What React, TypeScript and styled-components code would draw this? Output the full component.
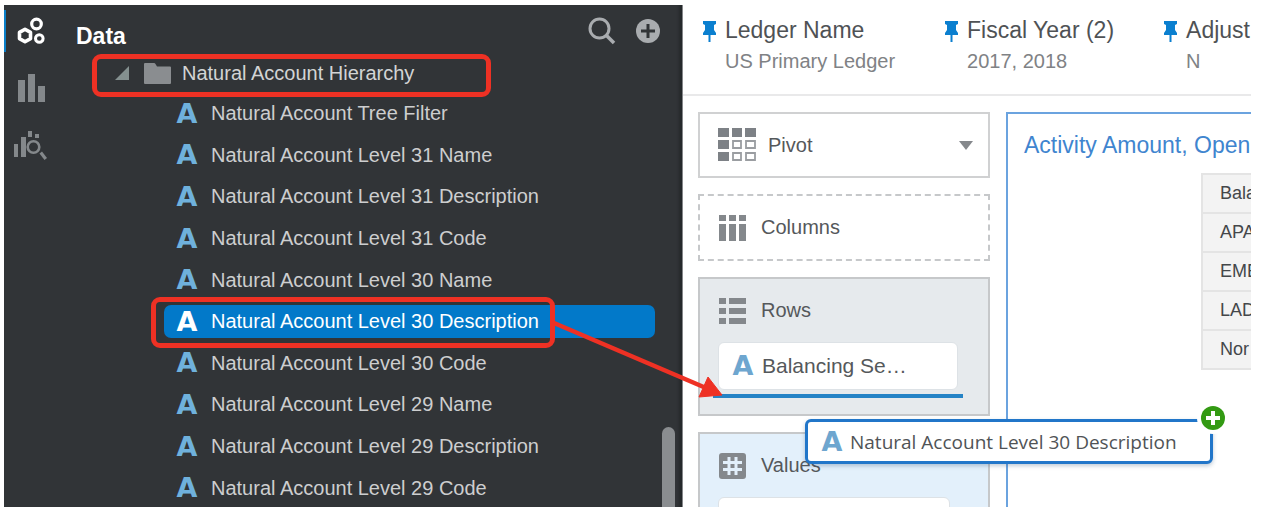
import React from "react";
import styled, { createGlobalStyle } from "styled-components";

const GlobalStyle = createGlobalStyle`
  * { box-sizing: border-box; }
  body {
    margin: 0;
    background: #fff;
    font-family: "Liberation Sans", Arial, sans-serif;
    font-size: 20px;
    color: #55585b;
  }
  button, select { font: inherit; color: inherit; background: none; border: 0; padding: 0; text-align: left; }
  svg { display: block; flex: none; }
`;

const Frame = styled.div`
  height: 100vh;
  padding: 5px 15px 11px 4px;
`;

const Workspace = styled.div`
  position: relative;
  display: flex;
  height: 100%;
  overflow: hidden;
`;

/* ---------- Sidebar ---------- */

const Sidebar = styled.aside`
  position: relative;
  display: flex;
  flex: 0 0 679px;
  background: #313437;
  border-right: 1px solid #85878a;
  box-shadow: inset -5px 0 3px -2px #26292b;
`;

const Rail = styled.nav`
  display: flex;
  flex-direction: column;
  width: 46px;
  padding-top: 5px;
`;

const RailButton = styled.button<{ $active?: boolean }>`
  display: flex;
  align-items: center;
  height: 42px;
  margin-bottom: 15px;
  padding-left: 6px;
  border-left: 2px solid ${(p) => (p.$active ? "#0a7fc8" : "transparent")};
  color: ${(p) => (p.$active ? "#fff" : "#84888b")};
`;

const DataPane = styled.section`
  display: flex;
  flex: 1;
  flex-direction: column;
  min-width: 0;
`;

const PaneHeader = styled.header`
  display: flex;
  align-items: center;
  gap: 20px;
  height: 52px;
  flex: none;
  padding: 0 22px 0 26px;
`;

const PaneTitle = styled.h1`
  flex: 1;
  margin: 0;
  padding-top: 10px;
  font-size: 23px;
  line-height: 24px;
  color: #fff;
`;

const HeaderButton = styled.button`
  color: #a9acaf;
`;

const FolderRow = styled.button`
  position: relative;
  display: flex;
  align-items: center;
  flex: none;
  height: 32px;
  padding-left: 65px;
  color: #d3d4d5;
  white-space: nowrap;
`;

const FolderName = styled.span`
  margin-left: 11px;
`;

const FieldList = styled.ul`
  display: flex;
  flex: 1;
  flex-direction: column;
  margin: 4px 0 -2px;
  padding: 0 27px 0 114px;
  list-style: none;
`;

const FieldItem = styled.li`
  position: relative;
  display: flex;
  align-items: center;
  flex: 1 1 0;
`;

const FieldButton = styled.button<{ $selected?: boolean }>`
  display: flex;
  align-items: center;
  width: 100%;
  height: 33px;
  padding-left: 12px;
  border-radius: 7px;
  white-space: nowrap;
  background: ${(p) => (p.$selected ? "#0279c9" : "transparent")};
  color: ${(p) => (p.$selected ? "#fff" : "#cdcecf")};
`;

const TypeMark = styled.span<{ $color: string }>`
  width: 22px;
  margin-right: 13px;
  font-family: "DejaVu Sans", sans-serif;
  font-size: 27px;
  font-weight: 700;
  line-height: 28px;
  text-align: center;
  color: ${(p) => p.$color};
`;

const Thumb = styled.div`
  position: absolute;
  right: 7px;
  bottom: 0;
  width: 13px;
  height: 80px;
  border-radius: 7px 7px 0 0;
  background: #8a8d90;
`;

/* ---------- Callouts ---------- */

const FolderCallout = styled.span`
  position: absolute;
  inset: -3px auto -8px 42px;
  width: 399px;
  border: 5px solid #ee3124;
  border-radius: 9px;
`;

const FieldCallout = styled.span`
  position: absolute;
  inset: -4px auto -5px -13px;
  width: 404px;
  border: 5px solid #ee3124;
  border-radius: 9px;
`;

const CalloutArrow = styled.svg`
  position: absolute;
  top: 305px;
  left: 546px;
`;

/* ---------- Main area ---------- */

const Main = styled.main`
  display: flex;
  flex: 1;
  flex-direction: column;
  min-width: 0;
`;

const FilterBar = styled.div`
  display: flex;
  flex: none;
  gap: 50px;
  height: 91px;
  padding: 11px 0 0 20px;
  border-bottom: 2px solid #e9e9ea;
  overflow: hidden;
`;

const Filter = styled.button`
  display: flex;
  align-items: flex-start;
  gap: 9px;
  white-space: nowrap;
`;

const FilterText = styled.span`
  display: flex;
  flex-direction: column;
`;

const FilterName = styled.span`
  font-size: 23px;
  line-height: 28px;
  color: #4f5255;
`;

const FilterValue = styled.span`
  line-height: 34px;
  color: #808285;
`;

const Content = styled.div`
  display: flex;
  flex: 1;
  gap: 16px;
  min-height: 0;
  padding: 16px 0 0 15px;
`;

const Grammar = styled.div`
  display: flex;
  flex-direction: column;
  flex: 0 0 292px;
  gap: 16px;
`;

const VizPicker = styled.label`
  display: flex;
  align-items: center;
  flex: none;
  height: 66px;
  padding: 0 15px 0 18px;
  border: 2px solid #d0d1d2;
`;

const VizSelect = styled.select`
  flex: 1;
  margin-left: 12px;
  appearance: none;
  outline: none;
  line-height: 24px;
`;

const DropZone = styled.section<{ $kind: "empty" | "target" | "values" }>`
  flex: none;
  padding: 0 18px;
  border: 2px ${(p) => (p.$kind === "empty" ? "dashed" : "solid")} #c6c8ca;
  background: ${(p) => ({ empty: "#fff", target: "#e6eaed", values: "#e3f0fb" })[p.$kind]};
`;

const ZoneHeader = styled.h2`
  display: flex;
  align-items: center;
  gap: 15px;
  height: 63px;
  margin: 0;
  font-size: 20px;
  font-weight: 400;
`;

const Chip = styled.button<{ $narrow?: boolean }>`
  display: flex;
  align-items: center;
  width: ${(p) => (p.$narrow ? 232 : 240)}px;
  height: 48px;
  padding-left: 13px;
  border: 1px solid #dde2e6;
  border-radius: 6px;
  background: #fff;
  font-size: 21px;
  white-space: nowrap;

  ${TypeMark} { margin-right: 8px; }
`;

const InsertLine = styled.div`
  height: 4px;
  width: 250px;
  margin: 4px 0 16px -5px;
  background: #2583c6;
`;

const VizPanel = styled.section`
  flex: 1;
  min-width: 0;
  overflow: hidden;
  border: solid #6ba3df;
  border-width: 2px 0 0 2px;
`;

const VizTitle = styled.h2`
  margin: 16px 0 0 16px;
  font-size: 23px;
  font-weight: 400;
  line-height: 30px;
  white-space: nowrap;
  color: #3f85cf;
`;

const PivotTable = styled.table`
  margin: 13px 0 0 193px;
  border-collapse: separate;
  border-spacing: 0;
  border-top: 2px solid #e4e4e4;
`;

const Cell = styled.td`
  width: 100px;
  height: 39px;
  padding: 0 0 0 17px;
  border: solid #e4e4e4;
  border-width: 0 0 2px 2px;
  background: #f3f3f3;
  font-size: 18px;
  font-weight: 400;
  text-align: left;
  color: #44474a;
`;

/* ---------- Dragged field ---------- */

const Ghost = styled.div`
  position: absolute;
  top: 414px;
  left: 801px;
  display: flex;
  align-items: center;
  width: 408px;
  height: 45px;
  padding-left: 13px;
  border: 3px solid #2176c9;
  border-radius: 6px;
  background: #fff;
  box-shadow: 0 2px 4px rgba(40, 80, 120, 0.3);
  font-family: "Open Sans", "Noto Sans", sans-serif;
  font-size: 19px;
  white-space: nowrap;
  color: #505356;

  ${TypeMark} { margin-right: 7px; }
`;

const AddBadge = styled.svg`
  position: absolute;
  top: -20px;
  right: -19px;
`;

/* ---------- Icons ---------- */

const PinSvg = styled.svg`
  margin-top: 5px;
`;

const PinIcon = () => (
  <PinSvg width="13" height="22" viewBox="0 0 13 22" fill="#0b7fcf" aria-hidden="true">
    <path d="M0 0h13v3l-2 1v5l2 3v2H7.500v7h-2v-7H0v-2l2-3V4L0 3z" />
  </PinSvg>
);

const GearsIcon = () => (
  <svg width="36" height="32" viewBox="0 0 36 32" fill="none" stroke="currentColor" aria-hidden="true">
    <path strokeWidth="3.600" strokeLinejoin="round" d="M13 14.200l5.500 3.200v6.200L13 26.800l-5.500-3.200v-6.200z" />
    <circle cx="24.500" cy="9" r="4.800" strokeWidth="3.200" />
    <circle cx="27.300" cy="23.500" r="3.800" strokeWidth="3" />
  </svg>
);

const BarsIcon = () => (
  <svg width="36" height="32" viewBox="0 0 36 32" fill="currentColor" aria-hidden="true">
    <path d="M6 8h7v22H6zM16 2h7v28h-7zM26 14h7v16h-7z" />
  </svg>
);

const ExploreIcon = () => (
  <svg width="36" height="34" viewBox="0 0 36 34" fill="currentColor" aria-hidden="true">
    <path d="M2 16h4v13H2zM9 9h5v20H9zM16 3h4v6h-4zM23 6h4v4h-4z" />
    <circle cx="21.500" cy="19" r="5.800" fill="none" stroke="currentColor" strokeWidth="2.600" />
    <path d="M27.500 25.500l2.500-2 5 6.500-2.500 2z" />
  </svg>
);

const SearchIcon = () => (
  <svg width="28" height="28" viewBox="0 0 28 28" fill="none" stroke="currentColor" aria-hidden="true">
    <circle cx="11.500" cy="11.500" r="9.500" strokeWidth="3" />
    <path d="M18 18l8 8" strokeWidth="3.500" />
  </svg>
);

const PlusIcon = () => (
  <svg width="24" height="24" viewBox="0 0 24 24" aria-hidden="true">
    <circle cx="12" cy="12" r="12" fill="currentColor" />
    <path d="M12 5v14M5 12h14" stroke="#313437" strokeWidth="3" />
  </svg>
);

const ExpandedIcon = () => (
  <svg width="14" height="14" viewBox="0 0 14 14" fill="#84908f" aria-hidden="true">
    <path d="M14 0v14H0z" />
  </svg>
);

const FolderSvg = styled.svg`
  margin-left: 15px;
`;

const FolderIcon = () => (
  <FolderSvg width="27" height="21" viewBox="0 0 27 21" fill="#8a8d90" aria-hidden="true">
    <path d="M0 1q0-1 1-1h9q1 0 1.500 1L13 3.500h13q1 0 1 1V20q0 1-1 1H1q-1 0-1-1z" />
  </FolderSvg>
);

const PivotIcon = () => (
  <svg width="38" height="34" viewBox="0 0 38 34" aria-hidden="true">
    <path fill="#7d8186" d="M0 0h11v9H0zM14 0h10v9H14zM27 0h11v9H27zM0 12h11v9H0zM0 24h11v9H0z" />
    <path fill="none" stroke="#9a9da1" strokeWidth="1.800" d="M15 13h8v7h-8zM28 13h9v7h-9zM15 25h8v7h-8zM28 25h9v7h-9z" />
  </svg>
);

const CaretIcon = () => (
  <svg width="14" height="9" viewBox="0 0 14 9" fill="#85888c" aria-hidden="true">
    <path d="M0 0h14L7 9z" />
  </svg>
);

const ColumnsIcon = () => (
  <svg width="28" height="28" viewBox="0 0 28 28" fill="#84888c" aria-hidden="true">
    <path d="M1 1h7v6H1zM11 1h7v6h-7zM21 1h7v6h-7zM1 10h7v17H1zM11 10h7v17h-7zM21 10h7v17h-7z" />
  </svg>
);

const RowsIcon = () => (
  <svg width="28" height="28" viewBox="0 0 28 28" fill="#84888c" aria-hidden="true">
    <path d="M1 1h7v6H1zM1 11h7v6H1zM1 21h7v6H1zM11 1h17v6H11zM11 11h17v6H11zM11 21h17v6H11z" />
  </svg>
);

const ValuesIcon = () => (
  <svg width="28" height="28" viewBox="0 0 28 28" aria-hidden="true">
    <rect x="1" y="1" width="27" height="26" rx="3" fill="#84888c" />
    <path d="M11 5v18M18 5v18M5 10.500h19M5 17.500h19" stroke="#e3f0fb" strokeWidth="3" />
  </svg>
);

/* ---------- Data ---------- */

const FIELDS = [
  "Natural Account Tree Filter",
  "Natural Account Level 31 Name",
  "Natural Account Level 31 Description",
  "Natural Account Level 31 Code",
  "Natural Account Level 30 Name",
  "Natural Account Level 30 Description",
  "Natural Account Level 30 Code",
  "Natural Account Level 29 Name",
  "Natural Account Level 29 Description",
  "Natural Account Level 29 Code",
];
const SELECTED = "Natural Account Level 30 Description";

const FILTERS = [
  { name: "Ledger Name", value: "US Primary Ledger" },
  { name: "Fiscal Year (2)", value: "2017, 2018" },
  { name: "Adjust", value: "N" },
];

const TABLE_ROWS = ["APA", "EME", "LAD", "Nor"];

export default function App() {
  return (
    <Frame>
      <GlobalStyle />
      <Workspace>
        <Sidebar>
          <Rail aria-label="Panels">
            <RailButton $active aria-label="Data"><GearsIcon /></RailButton>
            <RailButton aria-label="Visualizations"><BarsIcon /></RailButton>
            <RailButton aria-label="Analytics"><ExploreIcon /></RailButton>
          </Rail>
          <DataPane>
            <PaneHeader>
              <PaneTitle>Data</PaneTitle>
              <HeaderButton aria-label="Search"><SearchIcon /></HeaderButton>
              <HeaderButton aria-label="Add"><PlusIcon /></HeaderButton>
            </PaneHeader>
            <FolderRow aria-expanded="true">
              <ExpandedIcon />
              <FolderIcon />
              <FolderName>Natural Account Hierarchy</FolderName>
              <FolderCallout />
            </FolderRow>
            <FieldList>
              {FIELDS.map((name) => {
                const selected = name === SELECTED;
                return (
                  <FieldItem key={name}>
                    <FieldButton $selected={selected}>
                      <TypeMark $color={selected ? "#fff" : "#6fb1dc"} aria-hidden="true">A</TypeMark>
                      {name}
                    </FieldButton>
                    {selected && <FieldCallout />}
                  </FieldItem>
                );
              })}
            </FieldList>
          </DataPane>
          <Thumb />
        </Sidebar>

        <Main>
          <FilterBar>
            {FILTERS.map((f) => (
              <Filter key={f.name}>
                <PinIcon />
                <FilterText>
                  <FilterName>{f.name}</FilterName>
                  <FilterValue>{f.value}</FilterValue>
                </FilterText>
              </Filter>
            ))}
          </FilterBar>
          <Content>
            <Grammar>
              <VizPicker>
                <PivotIcon />
                <VizSelect aria-label="Visualization type">
                  <option>Pivot</option>
                </VizSelect>
                <CaretIcon />
              </VizPicker>
              <DropZone $kind="empty">
                <ZoneHeader><ColumnsIcon />Columns</ZoneHeader>
              </DropZone>
              <DropZone $kind="target">
                <ZoneHeader><RowsIcon />Rows</ZoneHeader>
                <Chip>
                  <TypeMark $color="#6ea6cf" aria-hidden="true">A</TypeMark>
                  Balancing Se…
                </Chip>
                <InsertLine />
              </DropZone>
              <DropZone $kind="values">
                <ZoneHeader><ValuesIcon />Values</ZoneHeader>
                <Chip $narrow aria-label="Value field" />
              </DropZone>
            </Grammar>
            <VizPanel>
              <VizTitle>Activity Amount, Open</VizTitle>
              <PivotTable>
                <thead>
                  <tr><Cell as="th" scope="col">Bala</Cell></tr>
                </thead>
                <tbody>
                  {TABLE_ROWS.map((r) => (
                    <tr key={r}><Cell>{r}</Cell></tr>
                  ))}
                </tbody>
              </PivotTable>
            </VizPanel>
          </Content>
        </Main>

        <CalloutArrow width="178" height="92" viewBox="0 0 178 92" aria-hidden="true">
          <path d="M4 13L156 78" stroke="#ee3124" strokeWidth="4.500" />
          <path d="M172 85L158 67L149 87z" fill="#ee3124" stroke="#ee3124" />
        </CalloutArrow>

        <Ghost>
          <TypeMark $color="#6ea6cf" aria-hidden="true">A</TypeMark>
          {SELECTED}
          <AddBadge width="32" height="32" viewBox="0 0 32 32" aria-hidden="true">
            <circle cx="16" cy="16" r="16" fill="#fff" />
            <circle cx="16" cy="16" r="12" fill="#339a13" />
            <path d="M16 9v14M9 16h14" stroke="#fff" strokeWidth="4" />
          </AddBadge>
        </Ghost>
      </Workspace>
    </Frame>
  );
}
